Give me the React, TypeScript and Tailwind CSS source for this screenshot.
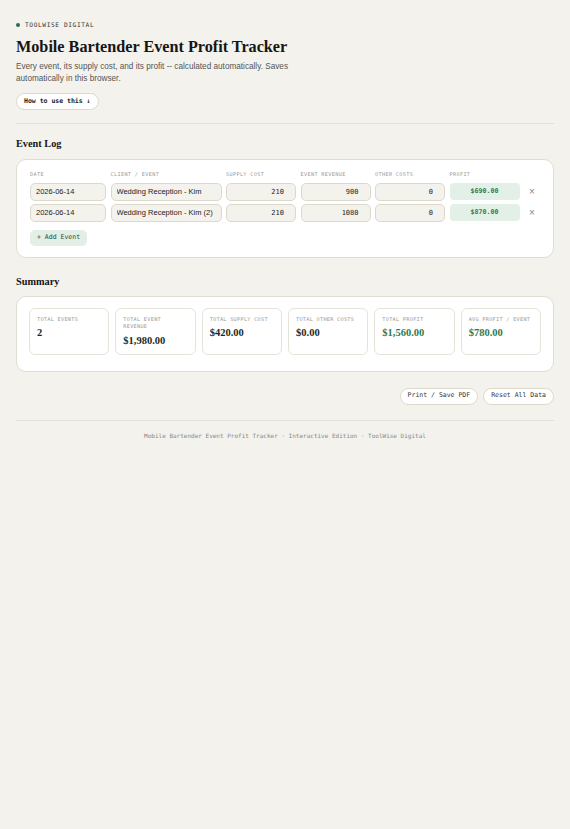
import { useState } from "react";

type Row = { id: number; date: string; client: string; supply: number; revenue: number; other: number };

const mono = "font-['DejaVu_Sans_Mono',monospace]";
const serif = "font-['Liberation_Serif',serif]";
const sans = "font-['Liberation_Sans',Arial,sans-serif]";

const money = (n: number) =>
  "$" + n.toLocaleString("en-US", { minimumFractionDigits: 2, maximumFractionDigits: 2 });

const cellInput =
  "h-[18px] w-full rounded-[5px] border border-[#dcd8cc] bg-[#f4f2ec] px-[5px] text-[7.5px] text-[#222] outline-none";

const cols = "grid grid-cols-[76px_111px_70px_70px_70px_70px_1fr] gap-x-[4.5px]";

function Stat({ label, value, green }: { label: string; value: string; green?: boolean }) {
  return (
    <div className="h-[47px] rounded-[6px] border border-[#e6e3da] bg-white px-[7px] pt-[7px]">
      <div className={`${mono} text-[5.2px] leading-[7.5px] tracking-[0.3px] text-[#999] uppercase`}>{label}</div>
      <div className={`${serif} mt-[3px] text-[10.5px] font-bold leading-[13px] ${green ? "text-[#2f7a4f]" : "text-[#1c2b24]"}`}>
        {value}
      </div>
    </div>
  );
}

export default function App() {
  const [rows, setRows] = useState<Row[]>([
    { id: 1, date: "2026-06-14", client: "Wedding Reception - Kim", supply: 210, revenue: 900, other: 0 },
    { id: 2, date: "2026-06-14", client: "Wedding Reception - Kim (2)", supply: 210, revenue: 1080, other: 0 },
  ]);

  const totalRevenue = rows.reduce((s, r) => s + r.revenue, 0);
  const totalSupply = rows.reduce((s, r) => s + r.supply, 0);
  const totalOther = rows.reduce((s, r) => s + r.other, 0);
  const totalProfit = totalRevenue - totalSupply - totalOther;
  const avg = rows.length ? totalProfit / rows.length : 0;

  const update = (id: number, patch: Partial<Row>) =>
    setRows((rs) => rs.map((r) => (r.id === id ? { ...r, ...patch } : r)));

  return (
    <div className={`min-h-[829px] bg-[#f4f2ec] px-[16px] pt-[20px] pb-[40px] ${sans}`}>
      {/* header */}
      <div className="flex h-[10px] items-center gap-[5px]">
        <span className="h-[4px] w-[4px] rounded-full bg-[#2f6b4a]" />
        <span className={`${mono} text-[6.2px] tracking-[0.6px] text-[#333]`}>TOOLWISE DIGITAL</span>
      </div>
      <h1 className={`${serif} mt-[7px] text-[16.2px] font-bold leading-[20px] text-[#161616]`}>
        Mobile Bartender Event Profit Tracker
      </h1>
      <p className="mt-[4px] max-w-[290px] text-[8.2px] leading-[12px] text-[#555]">
        Every event, its supply cost, and its profit -- calculated automatically. Saves automatically in this browser.
      </p>
      <button
        type="button"
        className={`${mono} mt-[8px] h-[17px] rounded-full border border-[#dcd8cc] bg-white px-[7px] text-[6.5px] font-bold text-[#222]`}
      >
        How to use this ↓
      </button>

      <div className="mt-[13px] h-px bg-[#e2dfd6]" />

      {/* event log */}
      <h2 className={`${serif} mt-[13px] text-[10.3px] font-bold leading-[14px] text-[#161616]`}>Event Log</h2>
      <div className="mt-[8px] rounded-[10px] border-[1.5px] border-[#e0ddd2] bg-white px-[13px] pt-[11px] pb-[11px]">
        <div className={`${cols} ${mono} text-[5.2px] tracking-[0.35px] text-[#999]`}>
          <div>DATE</div>
          <div>CLIENT / EVENT</div>
          <div>SUPPLY COST</div>
          <div>EVENT REVENUE</div>
          <div>OTHER COSTS</div>
          <div>PROFIT</div>
          <div />
        </div>
        <div className="mt-[4px] flex flex-col gap-[3px]">
          {rows.map((r) => {
            const profit = r.revenue - r.supply - r.other;
            return (
              <div key={r.id} className={`${cols} items-center`}>
                <input className={cellInput} value={r.date} onChange={(e) => update(r.id, { date: e.target.value })} />
                <input className={cellInput} value={r.client} onChange={(e) => update(r.id, { client: e.target.value })} />
                <input
                  className={`${cellInput} ${mono} !text-[7px] text-right !pr-[11px]`}
                  value={r.supply}
                  onChange={(e) => update(r.id, { supply: Number(e.target.value) || 0 })}
                />
                <input
                  className={`${cellInput} ${mono} !text-[7px] text-right !pr-[11px]`}
                  value={r.revenue}
                  onChange={(e) => update(r.id, { revenue: Number(e.target.value) || 0 })}
                />
                <input
                  className={`${cellInput} ${mono} !text-[7px] text-right !pr-[11px]`}
                  value={r.other}
                  onChange={(e) => update(r.id, { other: Number(e.target.value) || 0 })}
                />
                <div className={`${mono} flex h-[17px] items-center justify-center rounded-[4px] bg-[#e3f0e7] text-[6.6px] font-bold text-[#2f7a4f]`}>
                  {money(profit)}
                </div>
                <button
                  type="button"
                  onClick={() => setRows((rs) => rs.filter((x) => x.id !== r.id))}
                  className="flex justify-center text-[10px] leading-none text-[#888]"
                >
                  ×
                </button>
              </div>
            );
          })}
        </div>
        <button
          type="button"
          onClick={() =>
            setRows((rs) => [
              ...rs,
              { id: Date.now(), date: "2026-06-14", client: "", supply: 0, revenue: 0, other: 0 },
            ])
          }
          className={`${mono} mt-[7px] h-[16px] rounded-[5px] bg-[#e3eee6] px-[7px] text-[6.5px] text-[#244a35]`}
        >
          + Add Event
        </button>
      </div>

      {/* summary */}
      <h2 className={`${serif} mt-[17px] text-[10.3px] font-bold leading-[14px] text-[#161616]`}>Summary</h2>
      <div className="mt-[7px] rounded-[10px] border-[1.5px] border-[#e0ddd2] bg-white px-[12px] pt-[11px] pb-[16px]">
        <div className="grid grid-cols-6 gap-[6px]">
          <Stat label="Total Events" value={String(rows.length)} />
          <Stat label="Total Event Revenue" value={money(totalRevenue)} />
          <Stat label="Total Supply Cost" value={money(totalSupply)} />
          <Stat label="Total Other Costs" value={money(totalOther)} />
          <Stat label="Total Profit" value={money(totalProfit)} green />
          <Stat label="Avg Profit / Event" value={money(avg)} green />
        </div>
      </div>

      <div className="mt-[16px] flex justify-end gap-[5px]">
        <button type="button" className={`${mono} h-[17px] rounded-full border border-[#dcd8cc] bg-white px-[7px] text-[6.5px] text-[#333]`}>
          Print / Save PDF
        </button>
        <button
          type="button"
          onClick={() => setRows([])}
          className={`${mono} h-[17px] rounded-full border border-[#dcd8cc] bg-white px-[7px] text-[6.5px] text-[#333]`}
        >
          Reset All Data
        </button>
      </div>

      <div className="mt-[15px] h-px bg-[#e2dfd6]" />
      <p className={`${mono} mt-[10px] text-center text-[6px] text-[#888]`}>
        Mobile Bartender Event Profit Tracker · Interactive Edition · ToolWise Digital
      </p>
    </div>
  );
}
